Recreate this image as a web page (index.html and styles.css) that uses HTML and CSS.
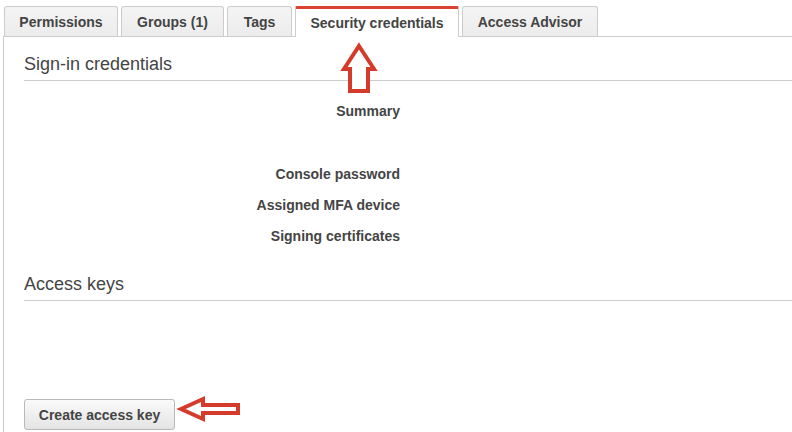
FILE: index.html
```html
<!DOCTYPE html>
<html>
<head>
<meta charset="utf-8">
<link rel="stylesheet" href="styles.css">
</head>
<body>
<div class="page">
  <div class="tabs">
    <div class="tab t1">Permissions</div>
    <div class="tab t2">Groups (1)</div>
    <div class="tab t3">Tags</div>
    <div class="tab active t4">Security credentials</div>
    <div class="tab t5">Access Advisor</div>
  </div>
  <div class="panel">
    <h2 class="section-title first">Sign-in credentials</h2>
    <div class="rows">
      <div class="row summary">Summary</div>
      <div class="row gap-before">Console password</div>
      <div class="row">Assigned MFA device</div>
      <div class="row">Signing certificates</div>
    </div>
    <h2 class="section-title second">Access keys</h2>
    <button class="btn">Create access key</button>
  </div>
  <svg class="arrow arrow-up" width="40" height="56" viewBox="0 0 40 56">
    <polygon points="19,6 34,29 28,29 28,51 10,51 10,29 4,29" fill="#fff" stroke="#d43b2a" stroke-width="4" stroke-linejoin="miter"/>
  </svg>
  <svg class="arrow arrow-left" width="68" height="30" viewBox="0 0 68 30">
    <polygon points="5,15 27,5 27,11 62,11 62,19 27,19 27,25" fill="#fff" stroke="#d43b2a" stroke-width="4" stroke-linejoin="miter"/>
  </svg>
</div>
</body>
</html>
```

FILE: styles.css
```css
html, body {
  margin: 0;
  padding: 0;
  background: #fff;
}
body {
  font-family: "Liberation Sans", Arial, sans-serif;
  color: #444;
  width: 792px;
  height: 432px;
  overflow: hidden;
}
.page {
  position: relative;
  margin-left: 3px;
  height: 432px;
}
.tabs {
  display: flex;
  gap: 3px;
  padding: 6px 0 0 1px;
  border-bottom: 1px solid #cccccc;
  height: 30px;
}
.tab {
  box-sizing: border-box;
  height: 30px;
  border: 1px solid #cccccc;
  border-bottom: none;
  border-radius: 3px 3px 0 0;
  background: linear-gradient(#f4f4f4, #ececec);
  font-size: 14px;
  font-weight: bold;
  color: #444;
  display: flex;
  align-items: center;
  justify-content: center;
}
.t1 { width: 114px; }
.t2 { width: 103px; }
.t3 { width: 65px; }
.t4 { width: 164px; }
.t5 { width: 136px; }
.tab.active {
  background: #fff;
  height: 31px;
  margin-bottom: -1px;
  border-top: 3px solid #d9432f;
  border-radius: 2px 2px 0 0;
  padding-bottom: 1px;
}
.panel {
  border-left: 1px solid #cccccc;
  padding: 0 0 0 20px;
  height: 395px;
  box-sizing: border-box;
}
.section-title {
  margin: 0;
  font-size: 18px;
  font-weight: normal;
  color: #444;
  line-height: 22px;
  padding-bottom: 5px;
  border-bottom: 1px solid #cccccc;
}
.section-title.first {
  padding-top: 16px;
}
.section-title.second {
  margin-top: 27px;
}
.rows {
  display: flex;
  flex-direction: column;
  gap: 11px;
  width: 376px;
  padding-top: 20px;
}
.row {
  font-size: 14px;
  font-weight: bold;
  line-height: 20px;
  text-align: right;
  color: #444;
}
.row.gap-before {
  margin-top: 32px;
}
.btn {
  margin-top: 98px;
  box-sizing: border-box;
  height: 31px;
  width: 151px;
  border: 1px solid #b9b9b9;
  border-radius: 3px;
  background: linear-gradient(#fafafa, #e4e4e4);
  font-family: "Liberation Sans", Arial, sans-serif;
  font-size: 14px;
  font-weight: bold;
  color: #444;
  padding: 0;
  display: block;
}
.arrow {
  position: absolute;
}
.arrow-up {
  left: 337px;
  top: 40px;
}
.arrow-left {
  left: 173px;
  top: 394px;
}
```
